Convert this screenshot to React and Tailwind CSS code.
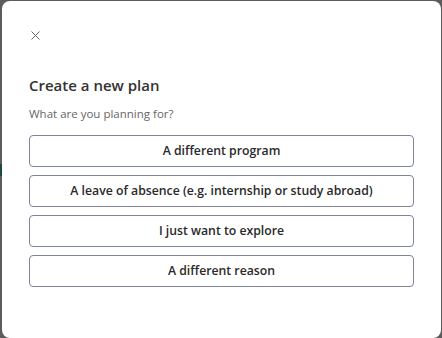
const options = [
  "A different program",
  "A leave of absence (e.g. internship or study abroad)",
  "I just want to explore",
  "A different reason",
];

export default function App() {
  return (
    <div className="relative h-[338px] w-[442px] overflow-hidden bg-[#5c5c5c] pl-[2px] pt-[1px] font-['Open_Sans',sans-serif]">
      <div className="absolute left-0 top-[164px] h-[12px] w-[2px] bg-[#1f4a3a]" />
      <div className="h-[337px] w-[439px] rounded-[8px] bg-white">
        <div className="px-[27px] pt-[28px]">
          <button className="flex h-[12px] w-[12px] items-center justify-center text-[#666]">
            <svg width="9" height="9" viewBox="0 0 9 9" fill="none" stroke="currentColor" strokeWidth="1">
              <path d="M0.5 0.5 L8.5 8.5 M8.5 0.5 L0.5 8.5" />
            </svg>
          </button>
          <h2 className="mt-[33px] text-[15px] font-semibold leading-[22px] text-[#323232]">
            Create a new plan
          </h2>
          <p className="mt-[10px] text-[11.5px] leading-[16px] text-[#666]">What are you planning for?</p>
          <div className="mt-[13px] flex flex-col gap-[8px]">
            {options.map((o) => (
              <button
                key={o}
                className="flex h-[32px] w-[385px] items-center justify-center rounded-[4px] border border-[#7f849b] bg-white text-[12.25px] font-semibold text-[#2a2a2a]"
              >
                {o}
              </button>
            ))}
          </div>
        </div>
      </div>
    </div>
  );
}
